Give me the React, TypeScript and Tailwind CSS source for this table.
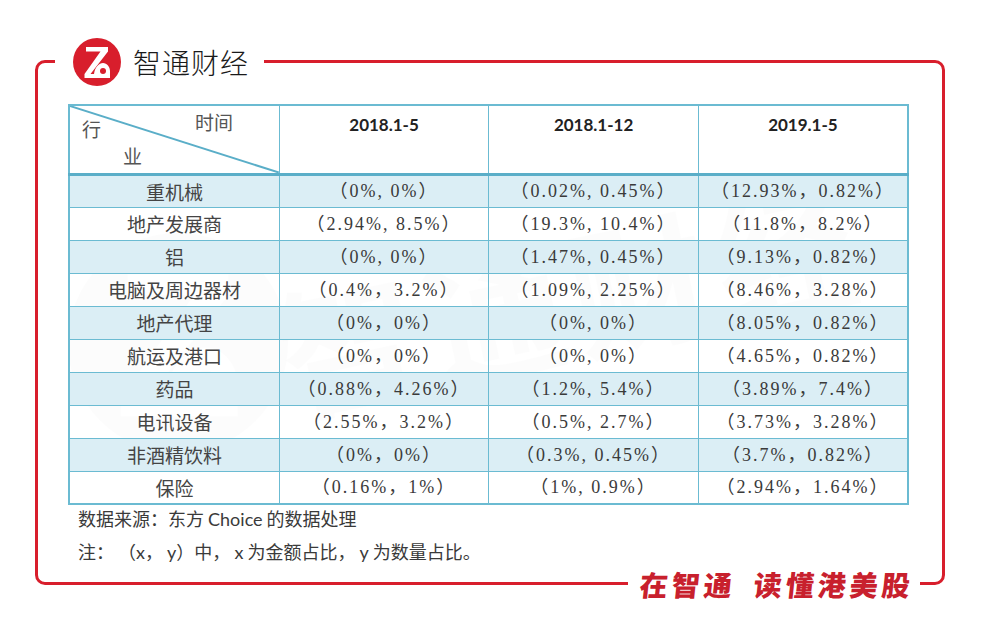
const rows = [
  ["重机械", "（0%, 0%）", "（0.02%, 0.45%）", "（12.93%，0.82%）"],
  ["地产发展商", "（2.94%, 8.5%）", "（19.3%, 10.4%）", "（11.8%，8.2%）"],
  ["铝", "（0%, 0%）", "（1.47%, 0.45%）", "（9.13%，0.82%）"],
  ["电脑及周边器材", "（0.4%，3.2%）", "（1.09%, 2.25%）", "（8.46%，3.28%）"],
  ["地产代理", "（0%，0%）", "（0%, 0%）", "（8.05%，0.82%）"],
  ["航运及港口", "（0%，0%）", "（0%, 0%）", "（4.65%，0.82%）"],
  ["药品", "（0.88%，4.26%）", "（1.2%, 5.4%）", "（3.89%，7.4%）"],
  ["电讯设备", "（2.55%，3.2%）", "（0.5%, 2.7%）", "（3.73%，3.28%）"],
  ["非酒精饮料", "（0%，0%）", "（0.3%, 0.45%）", "（3.7%，0.82%）"],
  ["保险", "（0.16%，1%）", "（1%, 0.9%）", "（2.94%，1.64%）"],
];

const periods = ["2018.1-5", "2018.1-12", "2019.1-5"];

const latin = { fontFamily: 'Lato, "Open Sans", sans-serif' };

function LogoMark({ red = "#d81e2c", white = "#fff" }: { red?: string; white?: string }) {
  return (
    <>
      <circle cx="24" cy="24" r="24" fill={red} />
      <path d="M13 9 H35 V13.5 L17.5 36 H11.5 L27.5 13.5 H13 Z" fill={white} />
      <path d="M11.5 36 H21 C22 29 26 25 30 25 C34 25 37 29 37 33 V40 H11.5 Z" fill={white} />
      <circle cx="30" cy="33" r="3" fill={red} />
    </>
  );
}

export default function App() {
  return (
    <div
      className="w-[983px] h-[641px] bg-white pt-[60px] pl-[35px] overflow-hidden"
      style={{ fontFamily: '"Noto Sans CJK SC", "Noto Sans", sans-serif' }}
    >
      <div className="relative w-[910px] h-[525px] border-[3px] border-[#d81e2c] rounded-[10px] pt-[41px] pl-[30px]">
        {/* header logo over the frame */}
        <div className="absolute left-[17px] top-[-26px] w-[209px] h-[50px] bg-white flex items-center pl-[18px] gap-[12px]">
          <svg width="48" height="48" viewBox="0 0 48 48">
            <LogoMark />
          </svg>
          <span className="text-[28px] leading-none font-light text-[#1a1a1a] tracking-[1px]">智通财经</span>
        </div>

        {/* watermark */}
        <div className="pointer-events-none absolute inset-0 overflow-hidden">
          <svg className="absolute left-[30px] top-[170px] opacity-[0.05]" width="220" height="220" viewBox="0 0 48 48">
            <LogoMark red="#000" white="#fff" />
          </svg>
          <div className="absolute left-[235px] top-[160px] -rotate-[12deg] text-[140px] leading-none font-bold text-black/[0.05] tracking-[8px] whitespace-nowrap">
            智通财经
          </div>
        </div>

        {/* table */}
        <table className="relative w-[841px] border-collapse border-2 border-[#6bbbd2] text-[#3a3a3a]">
          <thead>
            <tr className="h-[69px] border-b-[3px] border-[#5aaec8]">
              <th className="relative w-[211px] border border-[#6bbbd2] p-0 font-normal">
                <svg className="absolute inset-0" width="100%" height="100%" viewBox="0 0 211 69" preserveAspectRatio="none">
                  <line x1="0" y1="0" x2="211" y2="69" stroke="#5aaec8" strokeWidth="2" />
                </svg>
                <span className="absolute left-[12px] top-[13px] text-[19px] leading-none text-[#555]">行</span>
                <span className="absolute left-[125px] top-[6px] text-[19px] leading-none text-[#555]">时间</span>
                <span className="absolute left-[53px] top-[40px] text-[19px] leading-none text-[#555]">业</span>
              </th>
              {periods.map((p) => (
                <th
                  key={p}
                  className="w-[210px] border border-[#6bbbd2] align-top pt-[6px] text-[17px] font-bold text-[#222]"
                  style={latin}
                >
                  {p}
                </th>
              ))}
            </tr>
          </thead>
          <tbody>
            {rows.map((r, i) => (
              <tr key={r[0]} className={i % 2 === 0 ? "h-[33px] bg-[#dbeef5]" : "h-[33px] bg-white/80"}>
                <td className="border border-[#6bbbd2] text-center text-[19px] text-[#444] p-0 leading-none">{r[0]}</td>
                {r.slice(1).map((c, j) => (
                  <td
                    key={j}
                    className="border border-[#6bbbd2] text-center text-[18px] tracking-[2px] text-[#3a3a3a] p-0 leading-none"
                    style={{ fontFamily: '"Liberation Serif", "Noto Sans CJK SC", serif' }}
                  >
                    {c}
                  </td>
                ))}
              </tr>
            ))}
          </tbody>
        </table>

        {/* notes */}
        <div className="relative -mt-[3px] pl-[10px] text-[18px] leading-[32px] text-[#3a3a3a] whitespace-pre">
          <div>
            数据来源：东方 <span style={latin}>Choice</span> 的数据处理
          </div>
          <div>
            注： （<span style={latin}>x</span>， <span style={latin}>y</span>）中， <span style={latin}>x</span> 为金额占比， <span style={latin}>y</span> 为数量占比。
          </div>
        </div>

        {/* slogan over bottom border */}
        <div className="absolute left-[590px] bottom-[-22px] w-[292px] h-[40px] bg-white flex items-center pl-[12px]">
          <span className="text-[28px] leading-none font-black text-[#c8202d] tracking-[4px] -skew-x-[6deg] whitespace-nowrap">
            在智通
          </span>
          <span className="ml-[18px] text-[28px] leading-none font-black text-[#c8202d] tracking-[4px] -skew-x-[6deg] whitespace-nowrap">
            读懂港美股
          </span>
        </div>
      </div>
    </div>
  );
}
